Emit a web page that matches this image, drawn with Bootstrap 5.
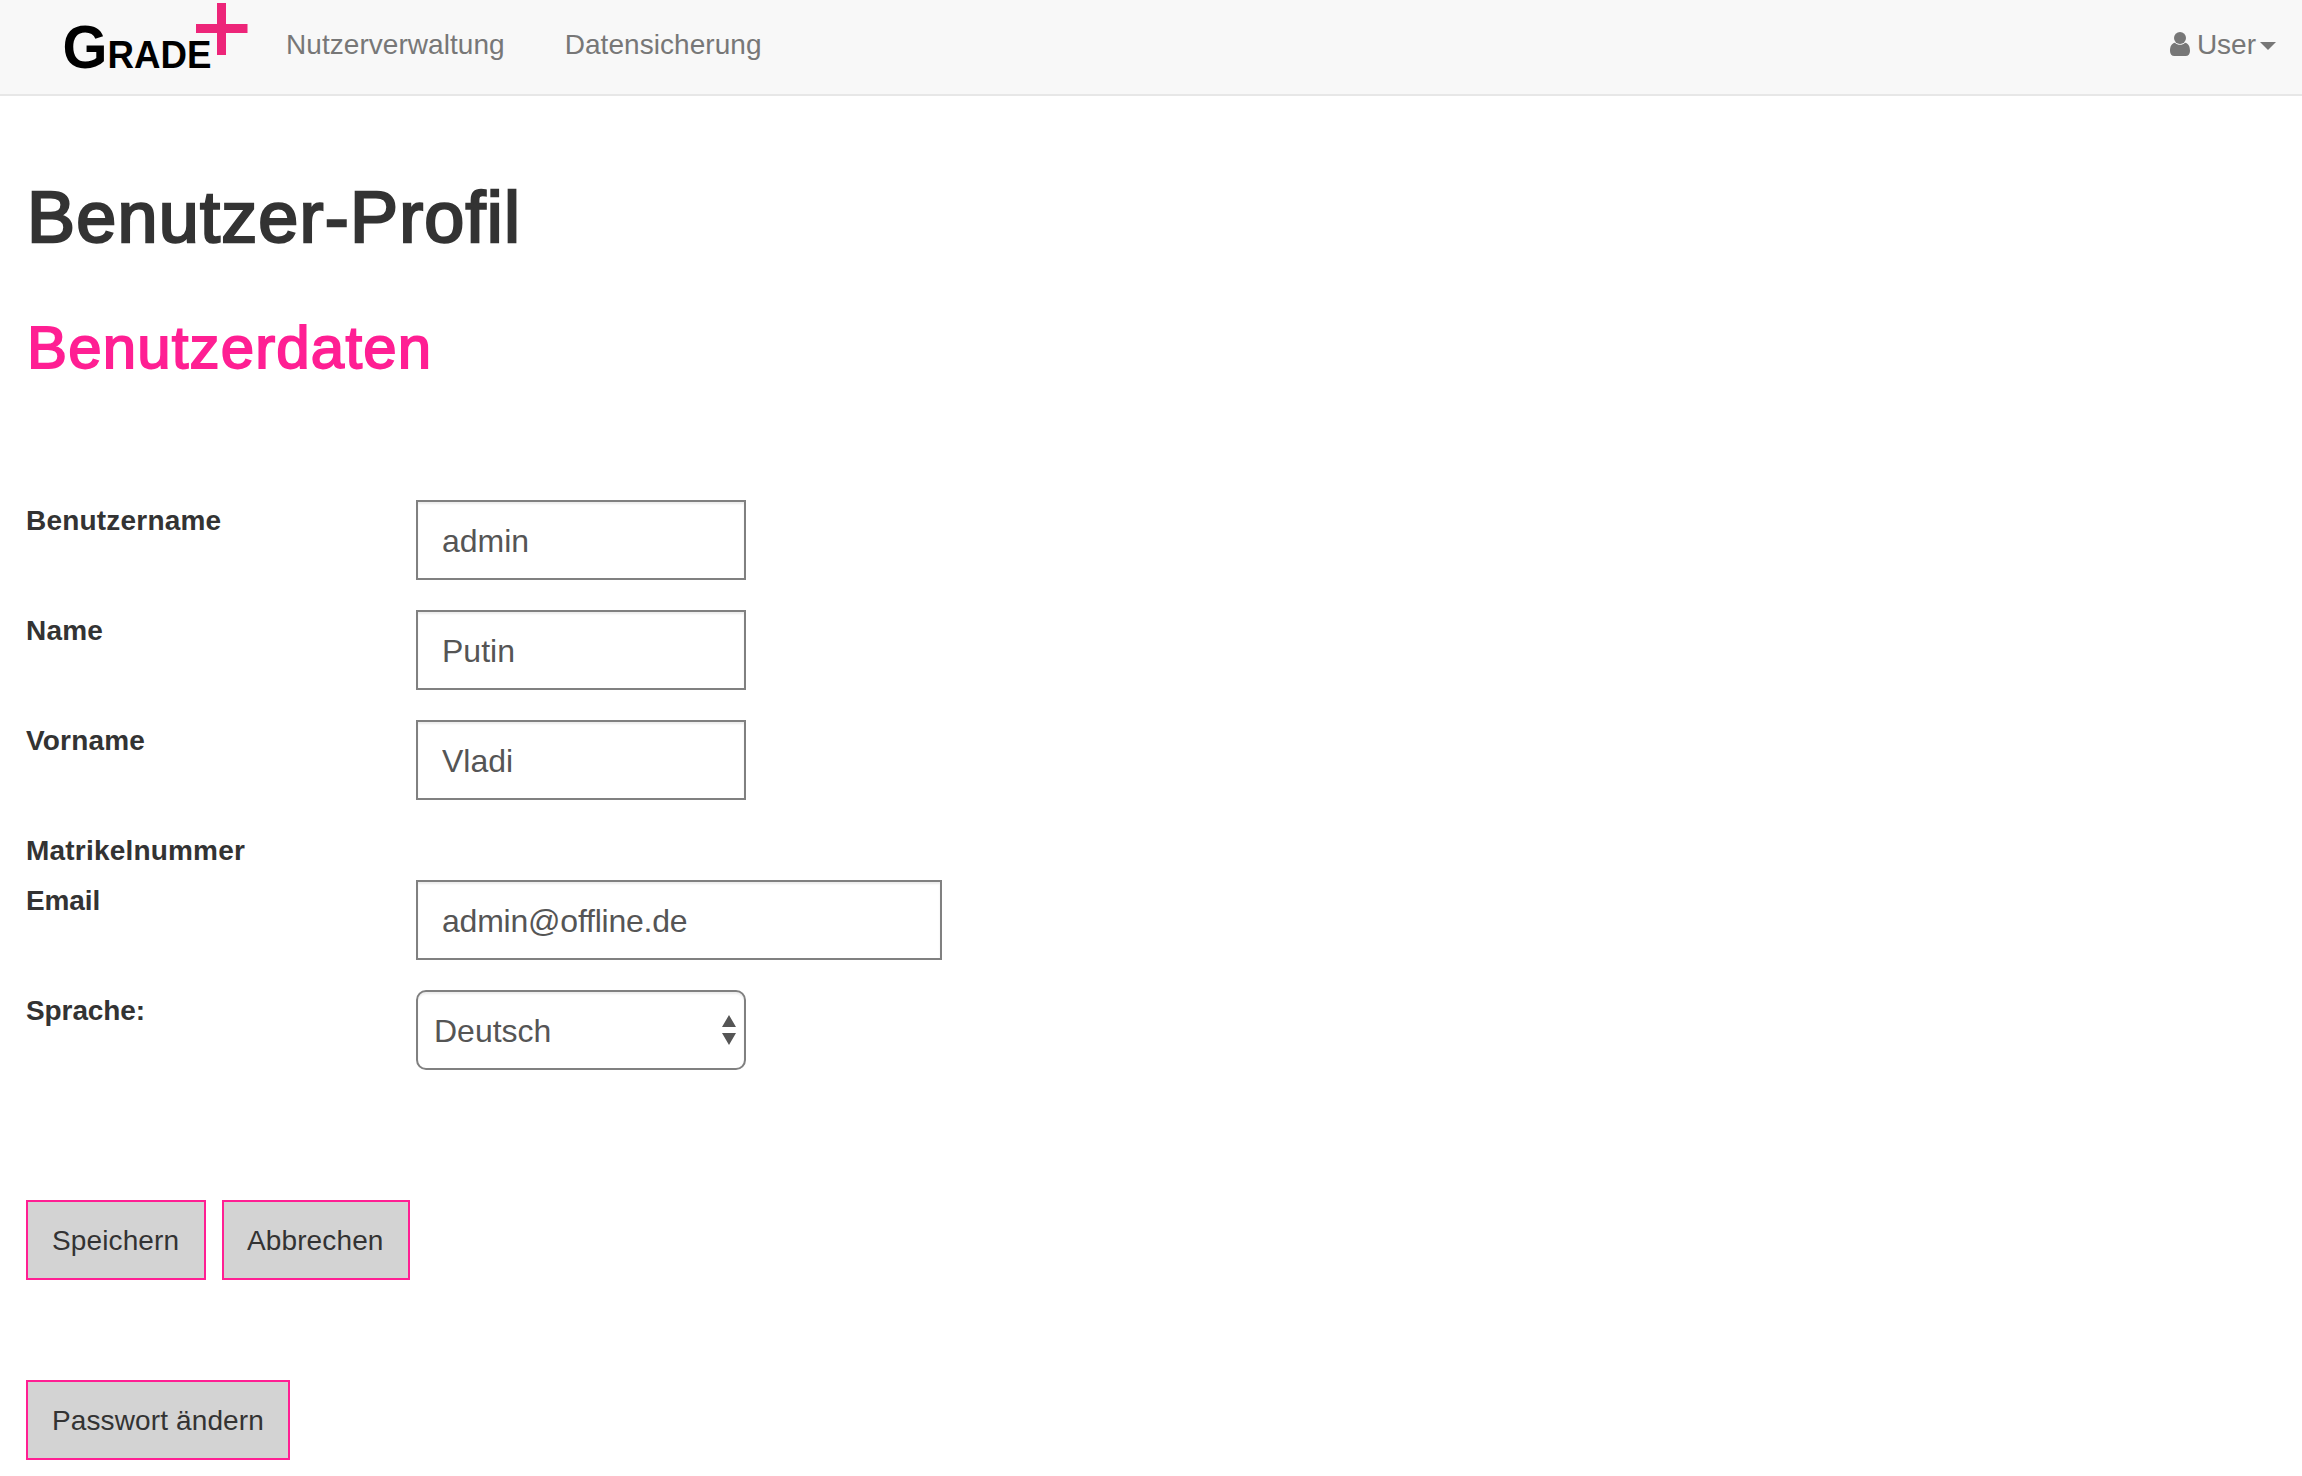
<!DOCTYPE html>
<html lang="de">
<head>
<meta charset="utf-8">
<meta name="viewport" content="width=device-width, initial-scale=1">
<title>Grade+ – Benutzer-Profil</title>
<link href="https://cdn.jsdelivr.net/npm/bootstrap@5.3.0/dist/css/bootstrap.min.css" rel="stylesheet">
<style>
  body { font-family: "Liberation Sans", Arial, sans-serif; font-size: 28px; line-height: 40px; color: #333; background: #fff; }
  .topbar { height: 96px; padding: 0 26px 0 64px; background: #f8f8f8; border-bottom: 2px solid #e7e7e7; }
  .topbar .navbar-brand { width: 184px; height: 94px; margin: 0; padding: 0; font-size: 28px; }
  .topbar .navbar-nav .nav-link { color: #777; padding: 25px 0 29px; line-height: 40px; }
  .main-links { margin-left: 38px; gap: 60px; letter-spacing: .05px; }
  .brand-text { font-weight: 700; }
  .topbar .dropdown-toggle::after { margin-left: 4px; border-top: 8px solid; border-right: 8px solid transparent; border-left: 8px solid transparent; vertical-align: 4px; }
  .user-icon { width: 20px; height: 24px; margin-right: 7px; vertical-align: -2px; }
  .page { padding: 82px 26px 0; }
  .page h1 { font-size: 72px; line-height: 79px; font-weight: 400; letter-spacing: 1.2px; -webkit-text-stroke: 2.4px #333; margin: 0 0 58px 1px; }
  .page h2 { font-size: 60px; line-height: 66px; font-weight: 400; letter-spacing: 1.15px; color: #ff1f93; -webkit-text-stroke: 1.8px #ff1f93; margin: 0 0 119px 1px; }
  .field { margin-bottom: 30px; }
  .field.plain { margin-bottom: 10px; }
  .field label, .field .caption { width: 390px; font-weight: 700; letter-spacing: .2px; line-height: 38px; padding-top: 2px; }
  .field .tight { letter-spacing: -.1px; }
  .field .form-control, .field .form-select { width: 330px; height: 80px; font-size: 32px; color: #555; border: 2px solid #808080; border-radius: 0; padding: 2px 24px 0; box-shadow: inset 0 2px 2px rgba(0,0,0,.075); line-height: 44px; }
  .field .wide { width: 526px; letter-spacing: -.22px; }
  .field .form-select { border-radius: 10px; padding: 2px 40px 0 16px; background-position: right 8px center; background-size: 14px 30px;
    background-image: url("data:image/svg+xml,%3Csvg xmlns='http://www.w3.org/2000/svg' viewBox='0 0 14 30'%3E%3Cpath fill='%23555' d='M0 12 7 0l7 12zM0 18h14L7 30z'/%3E%3C/svg%3E"); }
  .page .btn { height: 80px; padding: 2px 24px 0; font-size: 28px; line-height: 40px; letter-spacing: .12px; color: #333; background: #d3d3d3; border: 2px solid #ff1f93; border-radius: 0; text-align: left; white-space: nowrap; }
  .w-save { width: 180px; }
  .page .w-cancel { width: 188px; padding-left: 23px; }
  .w-password { width: 264px; }
  .actions { gap: 16px; margin: 130px 0 100px; }
</style>
</head>
<body>
<nav class="navbar navbar-expand topbar align-items-start">
  <a class="navbar-brand" href="#" aria-label="Grade+">
    <svg class="d-block" width="184" height="94" viewBox="64 0 184 94">
      <g class="brand-text" fill="#000">
        <text x="62.5" y="68" font-size="61" textLength="45" lengthAdjust="spacingAndGlyphs">G</text>
        <text x="107.5" y="68" font-size="39.500" textLength="104" lengthAdjust="spacingAndGlyphs">RADE</text>
      </g>
      <path fill="#ed2579" d="M217 3h9v21h21.500v9H226v22h-9V33h-21v-9h21z"/>
    </svg>
  </a>
  <div class="navbar-nav main-links">
    <a class="nav-link" href="#">Nutzerverwaltung</a>
    <a class="nav-link" href="#">Datensicherung</a>
  </div>
  <div class="navbar-nav ms-auto">
    <div class="nav-item dropdown">
      <a class="nav-link dropdown-toggle" href="#" data-bs-toggle="dropdown"><svg class="user-icon" viewBox="0 0 20 24" fill="currentColor"><circle cx="10" cy="6" r="6"/><path d="M5 10.700C1.500 11.300 0 14.500 0 19c0 3 1.800 5 4.300 5h11.400c2.500 0 4.300-2 4.300-5 0-4.500-1.500-7.700-5-8.300C13.600 12 12 12.800 10 12.800S6.400 12 5 10.700z"/></svg>User</a>
    </div>
  </div>
</nav>

<main class="page">
  <h1>Benutzer-Profil</h1>
  <h2>Benutzerdaten</h2>
  <form>
    <div class="field d-flex align-items-start"><label for="username">Benutzername</label><input class="form-control" id="username" type="text" value="admin"></div>
    <div class="field d-flex align-items-start"><label for="lastname">Name</label><input class="form-control" id="lastname" type="text" value="Putin"></div>
    <div class="field d-flex align-items-start"><label for="firstname">Vorname</label><input class="form-control" id="firstname" type="text" value="Vladi"></div>
    <div class="field plain d-flex"><span class="caption">Matrikelnummer</span></div>
    <div class="field d-flex align-items-start"><label class="tight" for="email">Email</label><input class="form-control wide" id="email" type="email" value="admin@offline.de"></div>
    <div class="field d-flex align-items-start mb-0"><label class="tight" for="language">Sprache:</label><select class="form-select" id="language"><option>Deutsch</option></select></div>
    <div class="actions d-flex">
      <button class="btn w-save" type="button">Speichern</button>
      <button class="btn w-cancel" type="button">Abbrechen</button>
    </div>
    <button class="btn w-password d-block" type="button">Passwort ändern</button>
  </form>
</main>
<script src="https://cdn.jsdelivr.net/npm/bootstrap@5.3.0/dist/js/bootstrap.bundle.min.js"></script>
</body>
</html>
